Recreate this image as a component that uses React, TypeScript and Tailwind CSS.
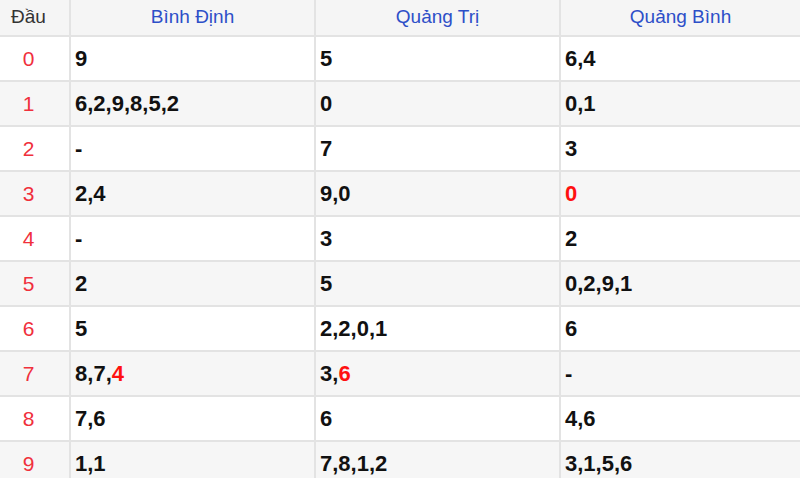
import React from "react";

type Cell = { text: string; hot?: number };

// each value list; hot = index of the digit drawn in red
const rows: Cell[][] = [
  [{ text: "9" }, { text: "5" }, { text: "6,4" }],
  [{ text: "6,2,9,8,5,2" }, { text: "0" }, { text: "0,1" }],
  [{ text: "-" }, { text: "7" }, { text: "3" }],
  [{ text: "2,4" }, { text: "9,0" }, { text: "0", hot: 0 }],
  [{ text: "-" }, { text: "3" }, { text: "2" }],
  [{ text: "2" }, { text: "5" }, { text: "0,2,9,1" }],
  [{ text: "5" }, { text: "2,2,0,1" }, { text: "6" }],
  [{ text: "8,7,4", hot: 2 }, { text: "3,6", hot: 1 }, { text: "-" }],
  [{ text: "7,6" }, { text: "6" }, { text: "4,6" }],
  [{ text: "1,1" }, { text: "7,8,1,2" }, { text: "3,1,5,6" }],
];

const provinces = ["Bình Định", "Quảng Trị", "Quảng Bình"];

const Values = ({ cell }: { cell: Cell }) => {
  if (cell.hot === undefined) return <>{cell.text}</>;
  const parts = cell.text.split(",");
  return (
    <>
      {parts.map((p, i) => (
        <React.Fragment key={i}>
          {i > 0 && ","}
          <span className={i === cell.hot ? "text-[#ff1010]" : ""}>{p}</span>
        </React.Fragment>
      ))}
    </>
  );
};

export default function App() {
  return (
    <div
      className="w-[800px] h-[478px] overflow-hidden bg-white"
      style={{ fontFamily: '"Liberation Sans", Arial, sans-serif' }}
    >
      <div className="grid grid-cols-[71px_245px_245px_239px]">
        <div className="h-[37px] bg-[#f5f5f5] border-b-2 border-r-2 border-[#e3e3e3] flex items-center justify-center pr-[12px] text-[19px] text-[#333]">
          Đầu
        </div>
        {provinces.map((p, i) => (
          <div
            key={p}
            className={`h-[37px] bg-[#f5f5f5] border-b-2 border-[#e3e3e3] flex items-center justify-center text-[19px] text-[#2d4fc8] ${
              i < 2 ? "border-r-2" : ""
            }`}
          >
            {p}
          </div>
        ))}

        {rows.map((row, r) => {
          const bg = r % 2 === 0 ? "bg-white" : "bg-[#f6f6f6]";
          return (
            <React.Fragment key={r}>
              <div
                className={`${bg} h-[45px] border-b-2 border-r-2 border-[#e3e3e3] flex items-center justify-center pr-[12px] text-[21px] text-[#f0303c]`}
              >
                {r}
              </div>
              {row.map((cell, c) => (
                <div
                  key={c}
                  className={`${bg} h-[45px] border-b-2 border-[#e3e3e3] flex items-center pl-[4px] text-[22px] font-bold text-[#111] ${
                    c < 2 ? "border-r-2" : ""
                  }`}
                >
                  <Values cell={cell} />
                </div>
              ))}
            </React.Fragment>
          );
        })}
      </div>
    </div>
  );
}
